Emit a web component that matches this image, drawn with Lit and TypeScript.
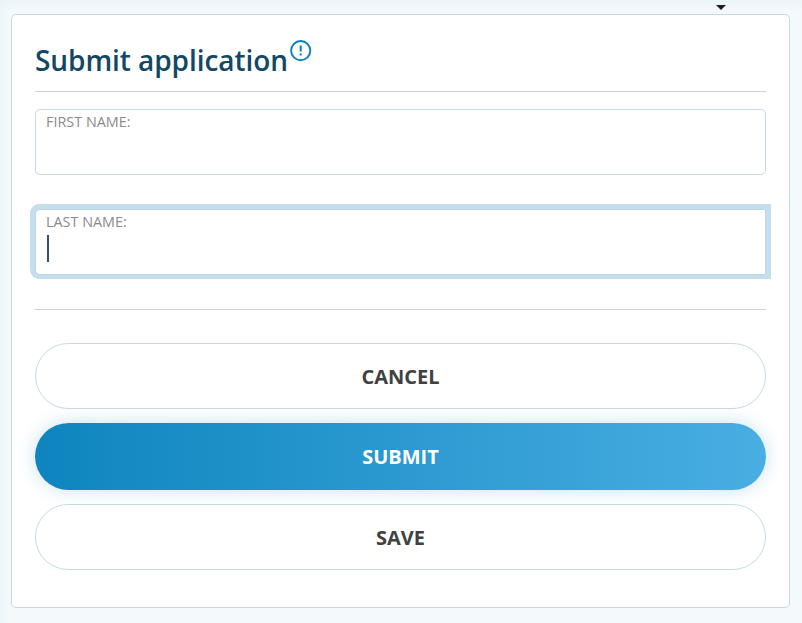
import { LitElement, html, css, svg } from "lit";
import { customElement } from "lit/decorators.js";

@customElement("app-root")
export class AppRoot extends LitElement {
  static styles = css`
    :host {
      display: block;
      position: relative;
      box-sizing: border-box;
      height: 623px;
      padding: 14px 12px 15px 11px;
      overflow: hidden;
      font-family: "Open Sans", "Noto Sans", sans-serif;
      background:
        linear-gradient(to bottom, #ebf4f8 0, rgba(244, 249, 252, 0) 11px),
        linear-gradient(to right, #eaf5fa 0, rgba(244, 249, 252, 0) 8px),
        #f4f9fc;
    }
    .caret {
      position: absolute;
      left: 716px;
      top: 5px;
      width: 0;
      height: 0;
      border: 5px solid transparent;
      border-top-color: #1b1f22;
      border-bottom: 0;
    }
    .card {
      box-sizing: border-box;
      height: 594px;
      padding: 0 23px;
      background: #fff;
      border: 1px solid #c6dae4;
      border-radius: 5px;
    }
    .head {
      display: flex;
      box-sizing: border-box;
      height: 77px;
      padding-top: 24px;
      border-bottom: 1px solid #ced2d5;
    }
    h1 {
      margin: 0;
      font-size: 28px;
      line-height: 42px;
      font-weight: 600;
      letter-spacing: -0.06px;
      color: #134865;
      white-space: nowrap;
    }
    .info {
      width: 22px;
      height: 22px;
      margin: 1px 0 0 2px;
    }
    .fields {
      display: flex;
      flex-direction: column;
      gap: 34px;
      padding: 17px 0 34px;
      border-bottom: 1px solid #ced2d5;
    }
    .field {
      box-sizing: border-box;
      height: 66px;
      padding: 2px 10px 0;
      border: 1px solid #c6dae4;
      border-radius: 5px;
    }
    .focused {
      border-color: #bfd7e5;
      border-radius: 5px 0 0 5px;
      box-shadow: 0 -0.5px 0 4.5px #c4deed, 0.5px -0.5px 0 4.5px #c4deed, -0.5px -0.5px 0 4.5px #c4deed;
    }
    .label {
      display: block;
      font-size: 14.4px;
      line-height: 20px;
      color: #8b8b8b;
    }
    .cursor {
      width: 2px;
      height: 27px;
      margin: 3px 0 0 1px;
      background: #3b505d;
    }
    .actions {
      display: flex;
      flex-direction: column;
      gap: 14px;
      padding-top: 33px;
    }
    button {
      box-sizing: border-box;
      height: 66px;
      padding: 1px 0 0;
      border: 1px solid #c6dae4;
      border-radius: 34px;
      background: #fff;
      color: #414141;
      font: 700 20px/26px "Open Sans", "Noto Sans", sans-serif;
    }
    .primary {
      height: 67px;
      border: 0;
      color: #fff;
      background: linear-gradient(to right, #0e85bf, #49aee2);
      box-shadow: 0 0 18px rgba(14, 120, 165, 0.22);
    }
  `;

  private fields = [
    { label: "FIRST NAME:", focused: false },
    { label: "LAST NAME:", focused: true },
  ];

  private icon = svg`
    <circle cx="10.7" cy="10.6" r="9.6" fill="none" stroke="#0b80b9" stroke-width="1.9"/>
    <path d="M10.7 5.5v6" fill="none" stroke="#0b80b9" stroke-width="2"/>
    <rect x="9.7" y="13.5" width="2" height="2" fill="#0b80b9"/>`;

  render() {
    return html`
      <span class="caret"></span>
      <section class="card">
        <header class="head">
          <h1>Submit application</h1>
          <svg class="info" viewBox="0 0 22 22">${this.icon}</svg>
        </header>
        <div class="fields">
          ${this.fields.map(
            (f) => html`<div class="field ${f.focused ? "focused" : ""}">
              <span class="label">${f.label}</span>
              ${f.focused ? html`<div class="cursor"></div>` : ""}
            </div>`
          )}
        </div>
        <div class="actions">
          <button>CANCEL</button>
          <button class="primary">SUBMIT</button>
          <button>SAVE</button>
        </div>
      </section>
    `;
  }
}
